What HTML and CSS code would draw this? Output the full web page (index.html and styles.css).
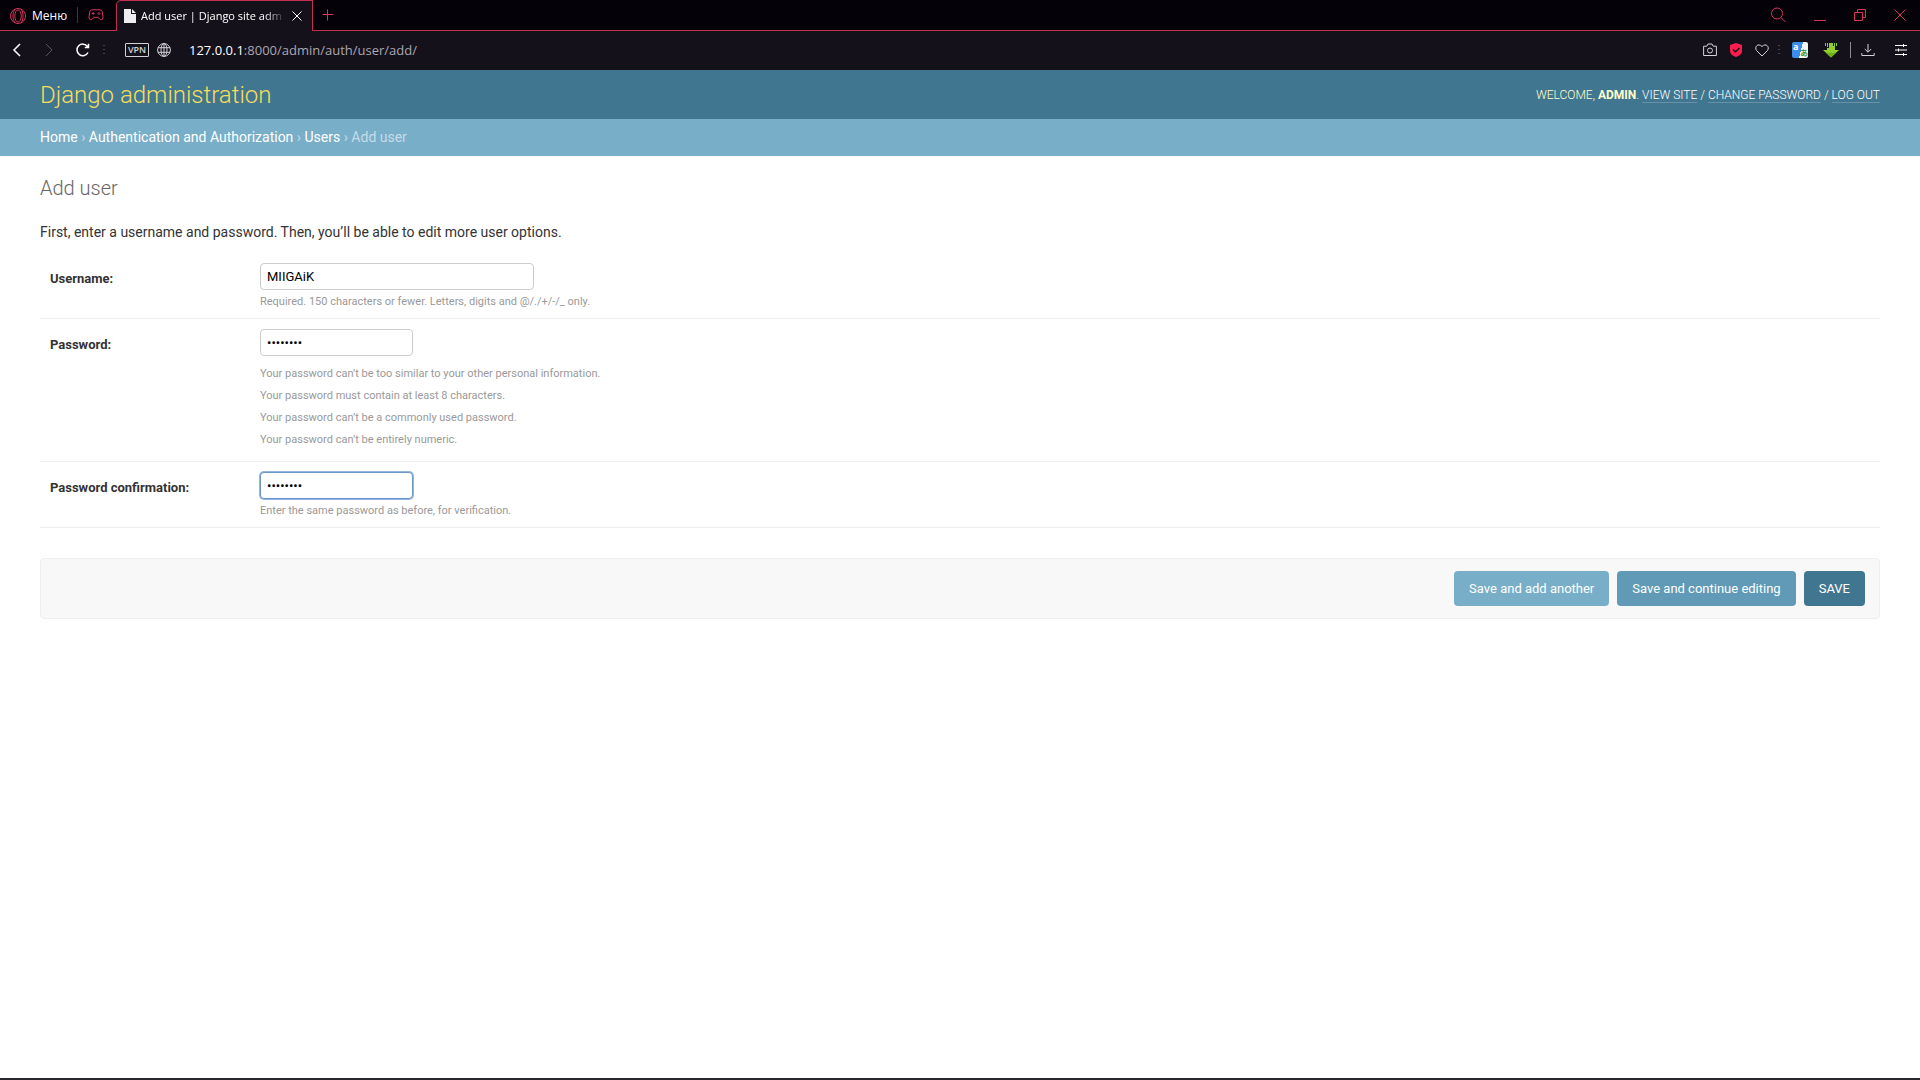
FILE: index.html
```html
<!DOCTYPE html>
<html lang="en">
<head>
    <meta charset="UTF-8">
    <meta name="viewport" content="width=device-width, initial-scale=1.0">
    <title>Add user | Django site admin</title>
    <link rel="stylesheet" href="styles.css">
</head>
<body>
    <!-- Browser window -->
    <div class="browser">
        <div class="tab-strip">
            <button type="button" class="menu-btn">
                <svg width="18" height="18" viewBox="0 0 18 18" class="line red"><circle cx="9" cy="9" r="7.500"/><ellipse cx="9" cy="9" rx="3.200" ry="6"/><path d="M6 2.500C3.300 5 3.300 13 6 15.500M12 2.500c2.700 2.500 2.700 10.500 0 13"/></svg>
                <span>Меню</span>
            </button>
            <span class="strip-divider"></span>
            <button type="button" class="icon-btn gx-btn" aria-label="GX">
                <svg width="16" height="12" viewBox="0 0 16 12" class="line red"><path d="M4 .8h8q1.800 0 2.200 2l.8 5q.2 3-1.800 3-1 0-1.700-1L10.300 8.300H5.700L4.500 9.800q-.7 1-1.700 1-2 0-1.800-3l.8-5Q2.200 .8 4 .8zM3.800 4.500h2.800M5.200 3.100v2.800M9.500 4.500h1M11.500 4.500h1M11 3v1M11 5v1"/></svg>
            </button>
            <div class="tab">
                <svg width="12" height="14" viewBox="0 0 12 14"><path fill="#eeeef2" d="M0 0h7v5h5v9H0z"/><path fill="#eeeef2" d="M8 0l4 4H8z"/></svg>
                <span class="tab-title">Add user | Django site adm</span>
                <button type="button" class="icon-btn" aria-label="Close tab">
                    <svg width="12" height="12" viewBox="0 0 12 12" class="line light"><path d="M1.500 1.500l9 9M10.500 1.500l-9 9"/></svg>
                </button>
            </div>
            <button type="button" class="icon-btn new-tab" aria-label="New tab">
                <svg width="12" height="12" viewBox="0 0 12 12" class="line red"><path d="M5.500 .5v11M.5 5.500h11"/></svg>
            </button>
            <div class="window-buttons">
                <button type="button" class="icon-btn" aria-label="Search tabs">
                    <svg width="16" height="16" viewBox="0 0 16 16" class="line red"><circle cx="7" cy="6.500" r="5.500"/><path d="M11 10.500l4.500 4.500"/></svg>
                </button>
                <button type="button" class="icon-btn" aria-label="Minimize">
                    <svg width="12" height="12" viewBox="0 0 12 12" class="line red"><path d="M0 11.500h12"/></svg>
                </button>
                <button type="button" class="icon-btn" aria-label="Restore">
                    <svg width="12" height="12" viewBox="0 0 12 12" class="line red"><path d="M.5 3.500h8v8h-8zM3.500 3.500v-3h8v8h-3"/></svg>
                </button>
                <button type="button" class="icon-btn" aria-label="Close">
                    <svg width="12" height="12" viewBox="0 0 12 12" class="line red"><path d="M.5 .5l11 11M11.500 .5l-11 11"/></svg>
                </button>
            </div>
        </div>

        <div class="toolbar">
            <div class="nav-buttons">
                <button type="button" class="icon-btn" aria-label="Back">
                    <svg width="10" height="14" viewBox="0 0 10 14" class="line light thick"><path d="M8 1L2 7l6 6"/></svg>
                </button>
                <button type="button" class="icon-btn" aria-label="Forward">
                    <svg width="10" height="14" viewBox="0 0 10 14" class="line dim"><path d="M2 1l6 6-6 6"/></svg>
                </button>
                <button type="button" class="icon-btn" aria-label="Reload">
                    <svg width="14" height="14" viewBox="0 0 14 14" class="line light thick"><path d="M12 9.500A5.800 5.800 0 1 1 11.500 3.500M12.500 .8v3.700H8.800"/></svg>
                </button>
            </div>
            <svg class="dots" width="4" height="12" viewBox="0 0 4 12"><path fill="#45424d" d="M1 1h2v1H1zM1 5h2v1H1zM1 9h2v1H1z"/></svg>
            <span class="vpn">VPN</span>
            <svg width="14" height="14" viewBox="0 0 14 14" class="line soft"><circle cx="7" cy="7" r="6.400"/><ellipse cx="7" cy="7" rx="3" ry="6.400"/><path d="M1 4.700h12M1 9.300h12M7 .6v12.800"/></svg>
            <div class="address"><span class="host">127.0.0.1</span>:8000/admin/auth/user/add/</div>
            <div class="page-actions">
                <svg width="14" height="14" viewBox="0 0 14 14" class="line soft"><path d="M.6 3.200h3.200L5 1h4l1.200 2.200h3.200v9.300H.6z"/><circle cx="7" cy="7.500" r="2.500"/></svg>
                <svg width="14" height="16" viewBox="0 0 14 16"><path fill="#fa1e4e" d="M7 1l6 2v6c0 3-3 5-6 6-3-1-6-3-6-6V3z"/><path fill="none" stroke="#15111b" stroke-width="1.500" d="M4 7.500l2.500 2.300L10.500 6"/></svg>
                <svg width="14" height="14" viewBox="0 0 14 14" class="line soft"><path d="M7 13L1.500 7.500C-1 4 3-.5 7 3.500c4-4 8 .5 5.500 4z"/></svg>
            </div>
            <svg class="dots" width="4" height="12" viewBox="0 0 4 12"><path fill="#45424d" d="M1 1h2v1H1zM1 5h2v1H1zM1 9h2v1H1z"/></svg>
            <div class="extensions">
                <span class="translate">
                    <span class="translate-a">a</span><span class="translate-b">あ</span>
                </span>
                <svg width="16" height="16" viewBox="0 0 16 16"><path fill="#8fce2c" d="M2 1h1v3H2zM4 1h1v4H4zM6 1h4v3h1V1h1v7h4l-8 7.500L0 8h4V6h2zM13 1h1v3h-1z"/><path fill="#6fb01f" d="M3 10.800h10l-5 4.700z"/></svg>
            </div>
            <span class="bar-divider"></span>
            <div class="browser-actions">
                <svg width="14" height="14" viewBox="0 0 14 14" class="line soft"><path d="M7 1v8M3.800 6L7 9.200 10.200 6M.8 10v2.500h12.400V10"/></svg>
                <svg width="12" height="14" viewBox="0 0 12 14" class="line light"><path d="M0 2.500h12M0 7h12M0 11.500h12M8.500 1v3M3.500 5.500v3M8.500 10v3"/></svg>
            </div>
        </div>
    </div>

    <div class="header">
        <h1 class="site-name"><a href="#">Django administration</a></h1>
        <div class="user-tools">
            Welcome, <strong>admin</strong>.
            <a href="#">View site</a> / <a href="#">Change password</a> / <a href="#">Log out</a>
        </div>
    </div>

    <div class="breadcrumbs">
        <a href="#">Home</a> &rsaquo; <a href="#">Authentication and Authorization</a> &rsaquo; <a href="#">Users</a> &rsaquo; Add user
    </div>

    <!-- Add user form -->
    <main class="content">
        <h2>Add user</h2>
        <form>
            <p class="intro">First, enter a username and password. Then, you’ll be able to edit more user options.</p>

            <div class="form-row">
                <label for="username">Username:</label>
                <div class="field">
                    <input type="text" id="username" class="text-field" value="MIIGAiK">
                    <div class="help">Required. 150 characters or fewer. Letters, digits and @/./+/-/_ only.</div>
                </div>
            </div>

            <div class="form-row">
                <label for="password1">Password:</label>
                <div class="field">
                    <input type="password" id="password1" value="12345678">
                    <ul class="help help-list">
                        <li>Your password can’t be too similar to your other personal information.</li>
                        <li>Your password must contain at least 8 characters.</li>
                        <li>Your password can’t be a commonly used password.</li>
                        <li>Your password can’t be entirely numeric.</li>
                    </ul>
                </div>
            </div>

            <div class="form-row">
                <label for="password2">Password confirmation:</label>
                <div class="field">
                    <input type="password" id="password2" class="focused" value="12345678">
                    <div class="help">Enter the same password as before, for verification.</div>
                </div>
            </div>

            <div class="submit-row">
                <button type="button" class="add-another">Save and add another</button>
                <button type="button" class="continue">Save and continue editing</button>
                <button type="button" class="save">SAVE</button>
            </div>
        </form>
    </main>
</body>
</html>
```

FILE: styles.css
```css
* {
    box-sizing: border-box;
}

body {
    display: flex;
    flex-direction: column;
    min-height: 100vh;
    margin: 0;
    border-bottom: 2px solid #2b282d;
    background: #fff;
    color: #333;
    font-family: Roboto, "Liberation Sans", sans-serif;
    font-size: 14px;
}

a {
    text-decoration: none;
}

button {
    border: none;
    font-family: inherit;
    cursor: pointer;
}

svg {
    flex: none;
    display: block;
}

/* Browser window */
.browser {
    background: #15111b;
    font-family: "Open Sans", "Noto Sans", sans-serif;
}

.tab-strip {
    display: flex;
    align-items: center;
    height: 31px;
    padding-left: 9px;
    background: #050109;
    border-bottom: 1px solid #c22f50;
}

.menu-btn {
    display: flex;
    align-items: center;
    gap: 5px;
    padding: 1px 0 0;
    background: none;
    color: #fff;
    font-size: 12px;
}

.icon-btn {
    display: flex;
    align-items: center;
    justify-content: center;
    padding: 0;
    background: none;
}

.line {
    fill: none;
    stroke-width: 1;
}

.thick {
    stroke-width: 1.5;
}

.red {
    stroke: #d9355a;
}

.light {
    stroke: #fff;
}

.soft {
    stroke: #d3d2d8;
}

.dim {
    stroke: #5b5862;
}

.strip-divider {
    width: 1px;
    height: 16px;
    margin: 0 10px;
    background: #3b3742;
}

.gx-btn {
    margin-right: 12px;
}

.tab {
    display: flex;
    align-items: center;
    align-self: flex-start;
    gap: 5px;
    width: 197px;
    height: 31px;
    padding: 0 9px 1px 7px;
    background: #15111b;
    border: 1px solid #c22f50;
    border-bottom: none;
    border-top-left-radius: 5px;
}

.tab-title {
    flex: 1;
    white-space: nowrap;
    color: #fff;
    font-size: 11px;
    mask-image: linear-gradient(to right, #000 85%, transparent);
}

.new-tab {
    margin-left: 9px;
}

.window-buttons {
    display: flex;
    align-items: center;
    gap: 28px;
    margin-left: auto;
    padding-right: 14px;
}

.toolbar {
    display: flex;
    align-items: center;
    height: 39px;
    padding: 0 13px 1px 12px;
}

.nav-buttons {
    display: flex;
    gap: 22px;
}

.dots {
    margin: 0 11px 0 8px;
}

.nav-buttons + .dots {
    margin: 0 19px 0 12px;
}

.vpn {
    width: 24px;
    height: 14px;
    margin-right: 8px;
    border: 1px solid #d3d2d8;
    border-radius: 1px;
    color: #d3d2d8;
    font-size: 9px;
    font-weight: 600;
    line-height: 12px;
    text-align: center;
}

.address {
    margin-left: 18px;
    color: #a9a7b0;
    font-size: 13px;
}

.host {
    color: #fff;
}

.page-actions {
    display: flex;
    align-items: center;
    gap: 12px;
    margin-left: auto;
}

.extensions {
    display: flex;
    align-items: center;
    gap: 15px;
}

.translate {
    display: flex;
    justify-content: space-between;
    width: 16px;
    height: 16px;
    border-radius: 2px;
    background: linear-gradient(105deg, #3c8df0 55%, #f2f6f4 55%);
    font-size: 9px;
    font-weight: bold;
    line-height: 10px;
}

.translate-a {
    padding-left: 1px;
    color: #fff;
}

.translate-b {
    align-self: flex-end;
    color: #3d9a4c;
    font-family: "Noto Sans CJK JP", sans-serif;
    font-size: 8px;
}

.bar-divider {
    width: 1px;
    height: 16px;
    margin: 0 10px 0 11px;
    background: #8b8991;
}

.browser-actions {
    display: flex;
    align-items: center;
    gap: 20px;
}

/* Header */
.header {
    display: flex;
    align-items: center;
    justify-content: space-between;
    height: 49px;
    padding: 0 40px;
    background: #417690;
    color: #ffc;
}

.site-name {
    margin: 0;
    font-size: 24px;
    font-weight: 300;
}

.site-name a {
    color: #f5dd5d;
}

.user-tools {
    font-size: 12px;
    font-weight: 300;
    text-transform: uppercase;
}

.user-tools strong {
    font-weight: 700;
}

.user-tools a {
    border-bottom: 1px solid #6791a6;
    color: #fff;
}

.breadcrumbs {
    padding: 10px 40px;
    background: #79aec8;
    color: #c4dce8;
    line-height: 17px;
}

.breadcrumbs a {
    color: #fff;
}

/* Form */
.content {
    padding: 20px 40px;
}

h2 {
    margin: 0 0 20px;
    color: #666;
    font-size: 20px;
    font-weight: 300;
    line-height: 24px;
}

.intro {
    margin: 0 0 9px;
    line-height: 24px;
}

.form-row {
    display: flex;
    padding: 10px 10px 9px;
    border-bottom: 1px solid #eee;
}

.form-row label {
    width: 210px;
    padding-top: 8px;
    font-size: 13px;
    font-weight: 700;
    line-height: 16px;
}

.field input {
    display: block;
    width: 153px;
    height: 27px;
    padding: 5px 6px;
    border: 1px solid #ccc;
    border-radius: 4px;
    color: #000;
    font-family: inherit;
    font-size: 13px;
}

.field .text-field {
    width: 274px;
}

.field .focused {
    border-color: #6d96c8;
    box-shadow: 0 0 0 1px #94b4de;
}

.help {
    margin-top: 4px;
    color: #999;
    font-size: 11px;
    line-height: 15px;
}

.help-list {
    margin: 7px 0 0;
    padding: 0 0 1px;
    line-height: 22px;
    list-style: none;
}

.submit-row {
    display: flex;
    justify-content: flex-end;
    gap: 8px;
    margin-top: 30px;
    padding: 12px 14px;
    background: #f8f8f8;
    border: 1px solid #eee;
    border-radius: 4px;
}

.submit-row button {
    height: 35px;
    padding: 0 15px;
    border-radius: 4px;
    color: #fff;
    font-size: 13px;
}

.add-another {
    background: #79aec8;
}

.continue {
    background: #609ab6;
}

.save {
    background: #417690;
}
```
